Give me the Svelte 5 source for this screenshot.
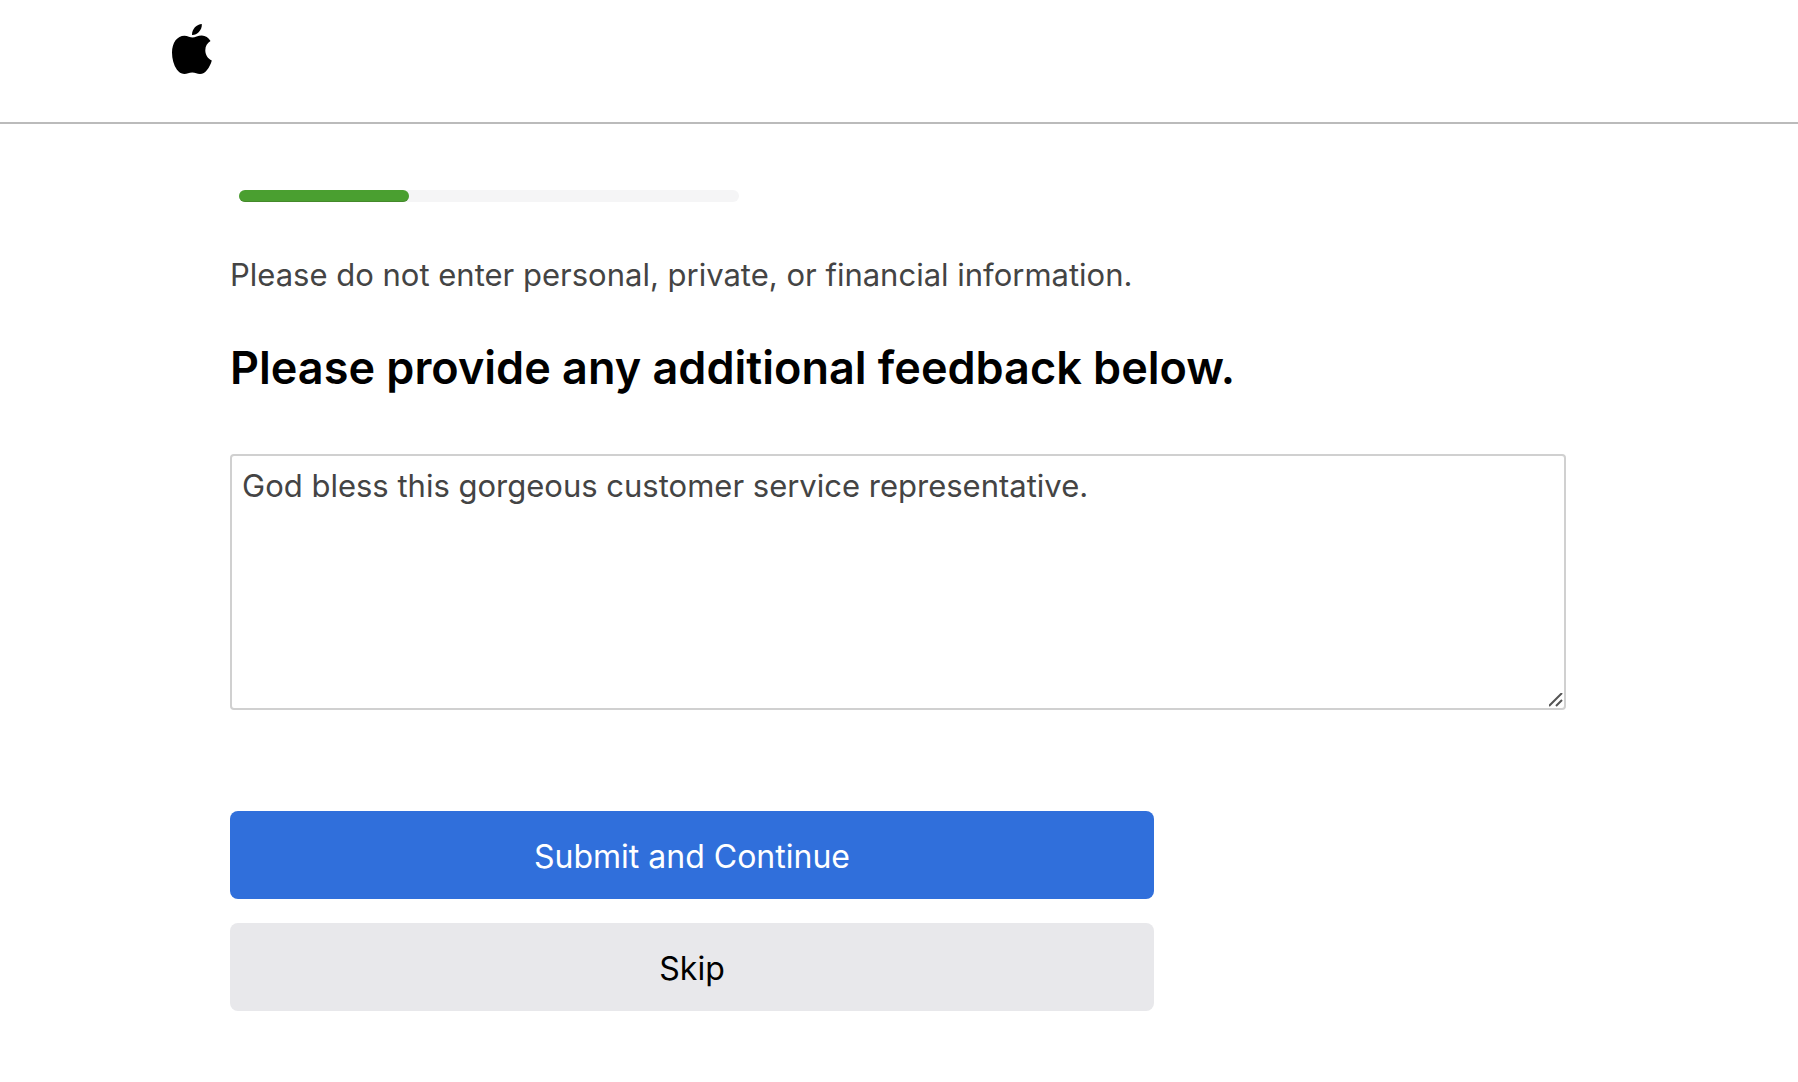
<script>
    let feedback = $state('God bless this gorgeous customer service representative.');
    let progress = $state(34);
</script>

<header class="header">
    <a class="logo" href="#home" aria-label="Apple">
        <svg viewBox="0 0 40 50" aria-hidden="true">
            <path d="M29.800 0c.3 3-1 6-2.900 8.100c-1.900 2-4.500 3.200-6.900 3c-.1-3 1.100-5.800 2.900-7.800c1.900-2 4.600-3.200 6.900-3.300z" />
            <path d="M38.500 17c-3.200 2-5.200 5.200-5.200 9.200c0 4.800 2.600 8.400 6.500 10.200c-1 3.600-2.600 6.800-4.800 9.600c-1.900 2.500-4.200 4-7 4c-3 0-4.600-1.600-7.800-1.600s-5 1.600-8 1.600c-3.200 0-5.400-1.600-7.400-4.400c-3-4.400-4.800-10.600-4.800-17c0-10.200 5.400-16.900 12.400-16.900c3.300 0 5.800 1.900 8.200 1.900c2.300 0 5.400-2 9.200-2c3.700 0 6.700 2.400 8.700 5.400z" />
        </svg>
    </a>
</header>

<main class="survey">
    <div class="progress" role="progressbar" aria-label="Survey progress" aria-valuenow={progress} aria-valuemin="0" aria-valuemax="100">
        <div class="progress-fill" style="width: {progress}%"></div>
    </div>

    <p class="notice">Please do not enter personal, private, or financial information.</p>

    <form onsubmit={(e) => e.preventDefault()}>
        <label class="question" for="feedback">Please provide any additional feedback below.</label>
        <textarea id="feedback" class="feedback" spellcheck="false" bind:value={feedback}></textarea>
        <div class="actions">
            <button type="submit" class="button primary">Submit and Continue</button>
            <button type="button" class="button secondary">Skip</button>
        </div>
    </form>
</main>

<style>
    :global(body) {
        margin: 0;
        background: #fff;
        font-family: Inter, "Liberation Sans", sans-serif;
    }

    .header {
        box-sizing: border-box;
        height: 124px;
        padding: 24px 172px;
        border-bottom: 2px solid #bbb;
    }

    .logo {
        display: block;
        width: 40px;
        height: 50px;
        color: #000;
    }

    .logo svg {
        display: block;
        width: 100%;
        height: 100%;
        fill: currentColor;
    }

    .survey {
        padding: 66px 232px 70px 230px;
    }

    .progress {
        width: 500px;
        height: 12px;
        margin-left: 9px;
        border-radius: 6px;
        background: #f5f5f6;
    }

    .progress-fill {
        box-sizing: border-box;
        height: 100%;
        border-radius: 6px;
        border-bottom: 1px solid #44892b;
        background: #4a9f30;
    }

    .notice {
        margin: 53px 0 0;
        color: #444;
        font-size: 31px;
        line-height: 40px;
    }

    .question {
        display: block;
        margin-top: 44px;
        font-size: 45px;
        font-weight: 600;
        line-height: 58px;
    }

    .feedback {
        box-sizing: border-box;
        display: block;
        width: 100%;
        height: 256px;
        margin-top: 57px;
        padding: 10px;
        border: 2px solid #d0d0d0;
        border-radius: 4px;
        outline: none;
        background: #fff;
        color: #444;
        font-family: inherit;
        font-size: 31px;
        line-height: 40px;
        resize: vertical;
    }

    .feedback::-webkit-resizer {
        background: url("data:image/svg+xml,%3Csvg xmlns='http://www.w3.org/2000/svg' width='15' height='15' fill='none' stroke='%23555' stroke-width='2'%3E%3Cpath d='M0 13L13 0M7 13L13 7'/%3E%3C/svg%3E") no-repeat right bottom;
    }

    .actions {
        display: flex;
        flex-direction: column;
        gap: 24px;
        max-width: 924px;
        margin-top: 101px;
    }

    .button {
        height: 88px;
        padding: 4px 24px 0;
        border: none;
        border-radius: 8px;
        font-family: inherit;
        font-size: 32px;
        line-height: 40px;
        cursor: pointer;
    }

    .primary {
        background: #306fdb;
        color: #fff;
    }

    .secondary {
        background: #e8e8eb;
        color: #000;
    }
</style>
